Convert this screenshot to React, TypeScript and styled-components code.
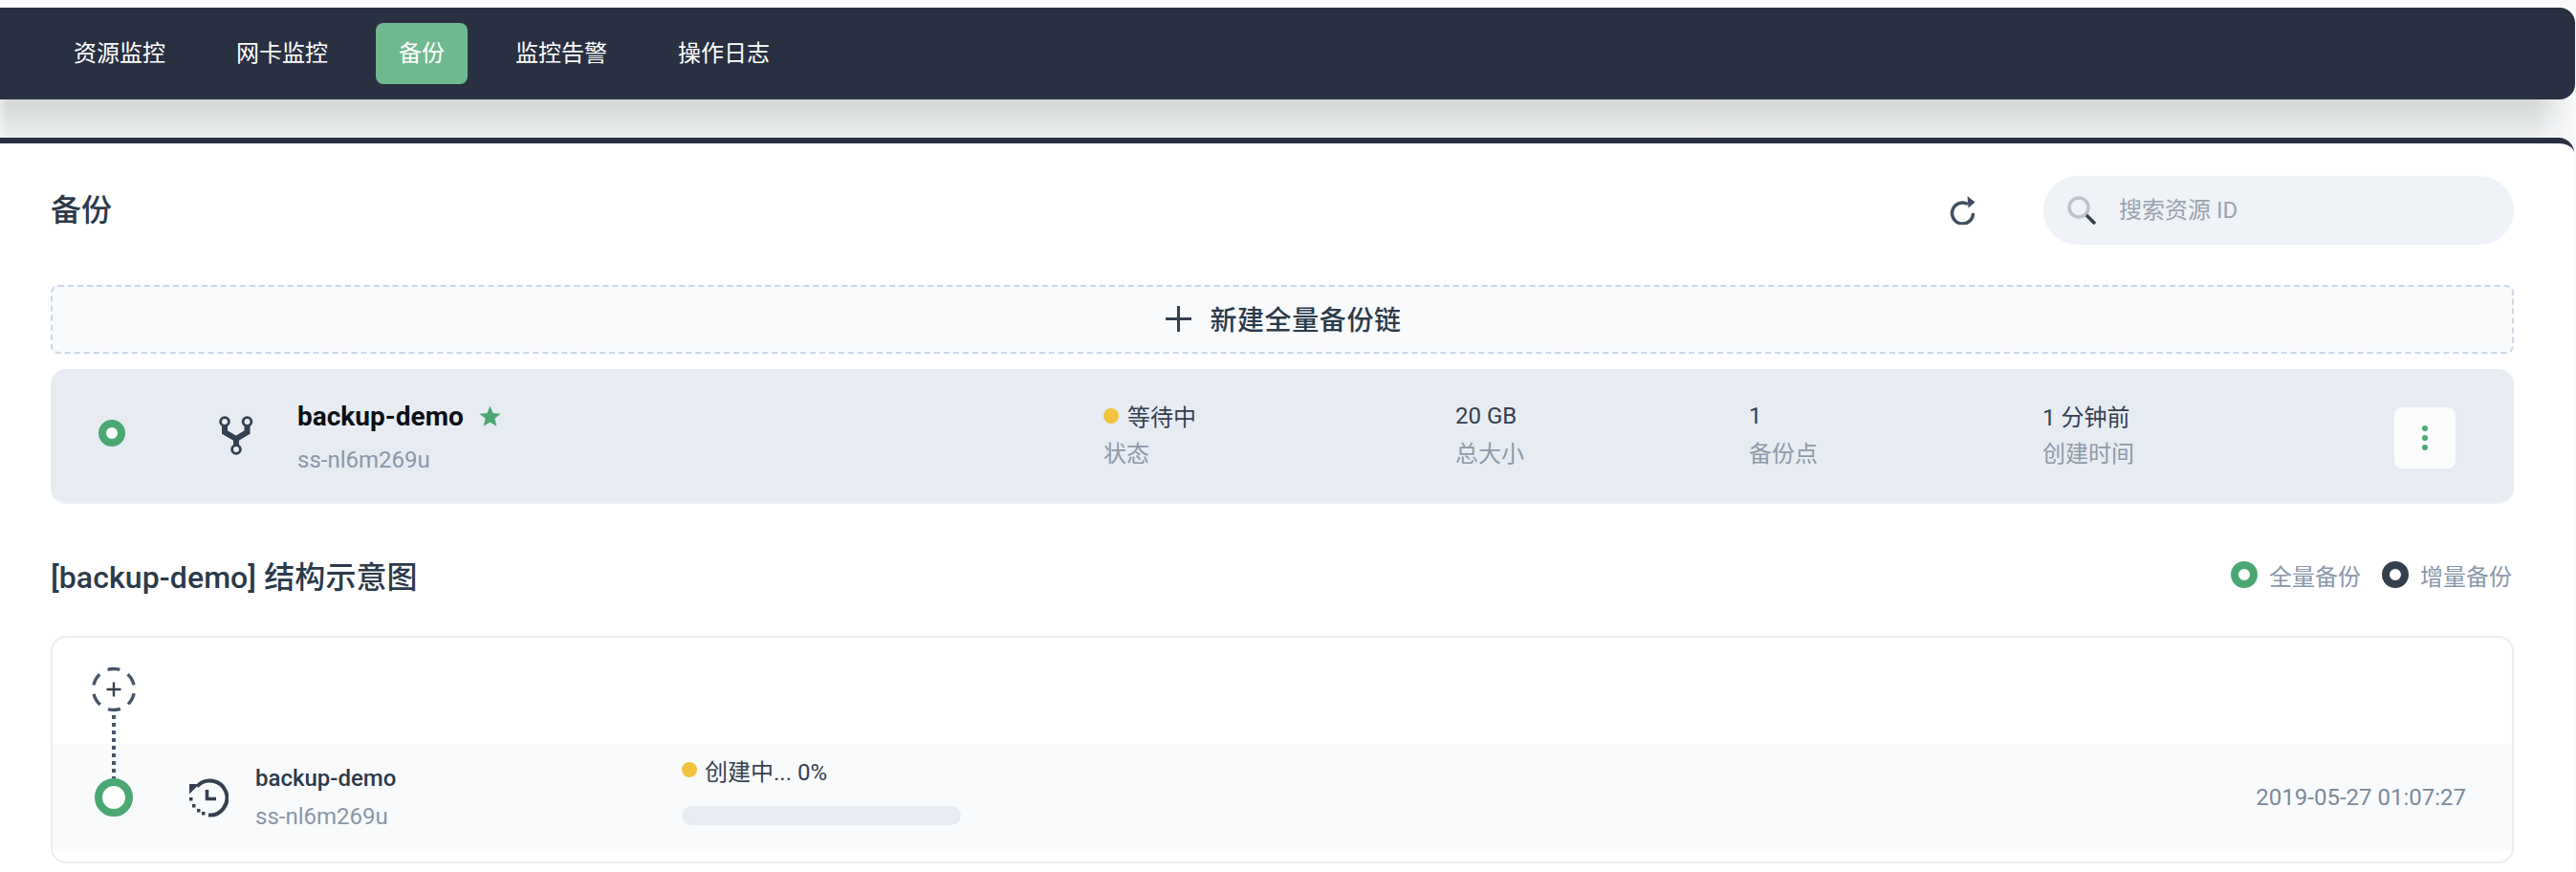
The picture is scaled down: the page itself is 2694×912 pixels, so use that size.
import styled, { createGlobalStyle } from "styled-components";

const GlobalStyle = createGlobalStyle`
  html, body {
    margin: 0;
    padding: 0;
    background: #f8f9fb;
  }
  body {
    font-family: Roboto, "Noto Sans CJK SC", sans-serif;
    overflow: hidden;
  }
  * {
    box-sizing: border-box;
  }
`;

const tabs = ["资源监控", "网卡监控", "备份", "监控告警", "操作日志"];

const stats = [
  { value: "20 GB", label: "总大小" },
  { value: "1", label: "备份点" },
  { value: "1 分钟前", label: "创建时间" },
];

function RefreshIcon() {
  return (
    <svg width="27" height="30" viewBox="0 0 27 30">
      <path d="M19 8.5 A11 11 0 1 0 24.5 18" fill="none" stroke="#3f4e60" strokeWidth="3.5" />
      <polygon points="18.5,0 26.5,6.5 19.5,12.5" fill="#3f4e60" />
    </svg>
  );
}

function SearchIcon() {
  return (
    <svg width="30" height="30" viewBox="0 0 30 30">
      <circle cx="12" cy="12" r="10" fill="none" stroke="#bcc5cf" strokeWidth="3.5" />
      <line x1="20" y1="20" x2="29" y2="29" stroke="#35404f" strokeWidth="3.5" />
    </svg>
  );
}

function ForkIcon() {
  return (
    <svg width="36" height="41" viewBox="0 0 36 41">
      <path d="M6 10 V17 L18 24 L29.5 17 V10 M18 24 V31" fill="none" stroke="#35404f" strokeWidth="6" />
      <circle cx="6" cy="6" r="4.4" fill="#e7ecf3" stroke="#35404f" strokeWidth="2.8" />
      <circle cx="29.5" cy="6" r="4.4" fill="#e7ecf3" stroke="#35404f" strokeWidth="2.8" />
      <circle cx="18" cy="35" r="4.4" fill="#e7ecf3" stroke="#35404f" strokeWidth="2.8" />
    </svg>
  );
}

function StarIcon() {
  return (
    <svg width="23" height="23" viewBox="0 0 24 24">
      <polygon points="12,0.5 15.2,8.4 23.6,9 17.1,14.4 19.2,22.8 12,18.3 4.8,22.8 6.9,14.4 0.4,9 8.8,8.4" fill="#4ba873" />
    </svg>
  );
}

function PlusIcon() {
  return (
    <svg width="29" height="29" viewBox="0 0 29 29">
      <path d="M14.5 1 V28 M1 14.5 H28" stroke="#35404f" strokeWidth="3" />
    </svg>
  );
}

function HistoryIcon() {
  return (
    <svg width="41" height="41" viewBox="0 0 41 41">
      <path d="M8 8.5 A18 18 0 1 1 20 38.5" fill="none" stroke="#35404f" strokeWidth="4" />
      <polygon points="0,6 10.5,6 0,16.5" fill="#35404f" />
      <rect x="0" y="20" width="3.5" height="3.5" fill="#35404f" />
      <rect x="3" y="27" width="3.5" height="3.5" fill="#35404f" />
      <rect x="8" y="32" width="3.5" height="3.5" fill="#35404f" />
      <rect x="13" y="35" width="3.5" height="3.5" fill="#35404f" />
      <path d="M18.5 12 V21.5 H28" fill="none" stroke="#35404f" strokeWidth="3.6" />
    </svg>
  );
}

function AddNode() {
  return (
    <NodeSvg width="48" height="111" viewBox="0 0 48 111">
      <circle cx="24" cy="54" r="21.5" fill="none" stroke="#47566a" strokeWidth="3.4" strokeDasharray="13 9.51" transform="rotate(11 24 54)" />
      <path d="M16.5 54 H31.5 M24 46.5 V61.5" stroke="#35404f" strokeWidth="2.4" />
      <line x1="24" y1="81" x2="24" y2="147" stroke="#47566a" strokeWidth="4" strokeDasharray="4 4" />
    </NodeSvg>
  );
}

export default function App() {
  return (
    <>
      <GlobalStyle />
      <Page>
        <TopNav>
          {tabs.map((tab) => (
            <Tab key={tab} $active={tab === "备份"}>{tab}</Tab>
          ))}
        </TopNav>
        <NavShade />
        <Card>
          <Header>
            <Title>备份</Title>
            <HeaderTools>
              <RefreshIcon />
              <SearchBox>
                <SearchIcon />
                <SearchInput placeholder="搜索资源 ID" readOnly />
              </SearchBox>
            </HeaderTools>
          </Header>
          <AddButton>
            <PlusIcon />
            新建全量备份链
          </AddButton>
          <ChainRow>
            <ChainRing $size={28} $width={8} $color="#4ba873" />
            <ForkIcon />
            <NameBlock>
              <NameLine>
                <ChainName>backup-demo</ChainName>
                <StarIcon />
              </NameLine>
              <SubText $line={46}>ss-nl6m269u</SubText>
            </NameBlock>
            <Stat>
              <StatValue>
                <Dot />
                等待中
              </StatValue>
              <StatLabel>状态</StatLabel>
            </Stat>
            {stats.map((s) => (
              <Stat key={s.label}>
                <StatValue>{s.value}</StatValue>
                <StatLabel>{s.label}</StatLabel>
              </Stat>
            ))}
            <MenuButton>
              <MenuDot />
              <MenuDot />
              <MenuDot />
            </MenuButton>
          </ChainRow>
          <SectionHead>
            <SectionTitle>[backup-demo] 结构示意图</SectionTitle>
            <Legend>
              <LegendItem>
                <Ring $size={28} $width={8} $color="#4ba873" />
                全量备份
              </LegendItem>
              <LegendItem>
                <Ring $size={28} $width={8} $color="#35404f" />
                增量备份
              </LegendItem>
            </Legend>
          </SectionHead>
          <Panel>
            <AddArea>
              <AddNode />
            </AddArea>
            <PointRow>
              <PointRing $size={40} $width={8} $color="#4ba873" />
              <HistoryIcon />
              <PointName>
                <PointTitle>backup-demo</PointTitle>
                <SubText $line={40}>ss-nl6m269u</SubText>
              </PointName>
              <Progress>
                <ProgressText>
                  <Dot />
                  创建中... 0%
                </ProgressText>
                <ProgressBar />
              </Progress>
              <DateText>2019-05-27 01:07:27</DateText>
            </PointRow>
          </Panel>
        </Card>
      </Page>
    </>
  );
}

const Page = styled.div`
  width: 2694px;
  height: 912px;
  padding: 8px 1px 0 0;
  overflow: hidden;
`;

const TopNav = styled.nav`
  display: flex;
  align-items: center;
  gap: 26px;
  height: 96px;
  padding-left: 53px;
  background: #293042;
  border-radius: 0 16px 16px 0;
`;

const Tab = styled.div<{ $active?: boolean }>`
  height: 64px;
  padding: 0 24px;
  border-radius: 8px;
  font-size: 24px;
  line-height: 64px;
  color: #ffffff;
  background: ${(p) => (p.$active ? "#70b88f" : "transparent")};
`;

const NavShade = styled.div`
  height: 40px;
  background:
    linear-gradient(90deg, rgba(248, 249, 251, 0.5) 0, rgba(248, 249, 251, 0) 8px, rgba(248, 249, 251, 0) calc(100% - 44px), #f8f9fb 100%),
    linear-gradient(#d3d6d6, #eceef0);
`;

const Card = styled.main`
  height: 768px;
  margin-right: 1px;
  padding: 34px 0 0 53px;
  background: #ffffff;
  border-top: 6px solid #293042;
  border-radius: 0 16px 0 0;
`;

const Header = styled.header`
  display: flex;
  align-items: center;
  justify-content: space-between;
  width: 2576px;
  height: 72px;
`;

const Title = styled.h1`
  margin: 0;
  font-size: 32px;
  font-weight: 500;
  line-height: 72px;
  color: #2c3a4a;
`;

const HeaderTools = styled.div`
  display: flex;
  align-items: center;
  gap: 71px;
`;

const SearchBox = styled.div`
  display: flex;
  align-items: center;
  gap: 24px;
  width: 492px;
  height: 72px;
  padding-left: 25px;
  background: #eff2f7;
  border-radius: 36px;
`;

const SearchInput = styled.input`
  flex: 1;
  min-width: 0;
  padding: 0;
  border: 0;
  outline: 0;
  background: transparent;
  font-family: inherit;
  font-size: 24px;
  color: #35404f;
  &::placeholder {
    color: #9aa3af;
    opacity: 1;
  }
`;

const AddButton = styled.div`
  display: flex;
  align-items: center;
  justify-content: center;
  gap: 18px;
  width: 2576px;
  height: 72px;
  margin-top: 42px;
  padding: 0 0 2px 2px;
  background: #f8fafc;
  border: 2px dashed #cbd8e6;
  border-radius: 8px;
  font-size: 28px;
  font-weight: 500;
  letter-spacing: 0.6px;
  color: #2c3a4a;
`;

const ChainRow = styled.section`
  display: grid;
  grid-template-columns: 126px 82px 843px 368px 307px 307px 368px 64px;
  align-items: center;
  width: 2576px;
  height: 141px;
  margin-top: 16px;
  padding: 0 61px 0 50px;
  background: #e7ecf3;
  border-bottom: 2px solid #eef2f6;
  border-radius: 16px;
`;

const Ring = styled.span<{ $size: number; $width: number; $color: string }>`
  display: block;
  flex: none;
  width: ${(p) => p.$size}px;
  height: ${(p) => p.$size}px;
  background: #ffffff;
  border: ${(p) => p.$width}px solid ${(p) => p.$color};
  border-radius: 50%;
`;

const ChainRing = styled(Ring)`
  margin-bottom: 6px;
`;

const NameBlock = styled.div`
  display: flex;
  flex-direction: column;
  padding-top: 5px;
`;

const NameLine = styled.div`
  display: flex;
  align-items: center;
  gap: 16px;
  height: 46px;
`;

const ChainName = styled.span`
  font-size: 28px;
  font-weight: 700;
  color: #0c0f14;
`;

const SubText = styled.div<{ $line: number }>`
  height: ${(p) => p.$line}px;
  font-size: 24px;
  line-height: ${(p) => p.$line}px;
  color: #8a97a8;
`;

const Stat = styled.div`
  display: flex;
  flex-direction: column;
  padding-bottom: 2px;
`;

const StatValue = styled.div`
  display: flex;
  align-items: center;
  gap: 9px;
  height: 40px;
  font-size: 24px;
  color: #35404f;
`;

const StatLabel = styled.div`
  height: 40px;
  font-size: 24px;
  line-height: 40px;
  color: #8f9aa8;
`;

const Dot = styled.span`
  flex: none;
  width: 16px;
  height: 16px;
  background: #f1c33f;
  border-radius: 50%;
`;

const MenuButton = styled.div`
  display: flex;
  flex-direction: column;
  align-items: center;
  justify-content: center;
  gap: 4px;
  width: 64px;
  height: 64px;
  margin-top: 4px;
  background: #fbfcfd;
  border-radius: 8px;
`;

const MenuDot = styled.span`
  width: 6px;
  height: 6px;
  background: #4ba873;
  border-radius: 50%;
`;

const SectionHead = styled.div`
  display: flex;
  align-items: center;
  justify-content: space-between;
  width: 2576px;
  height: 48px;
  margin-top: 50px;
`;

const SectionTitle = styled.h2`
  margin: 0;
  font-size: 32px;
  font-weight: 500;
  letter-spacing: 0.1px;
  color: #2c3a4a;
`;

const Legend = styled.div`
  display: flex;
  align-items: center;
  gap: 22px;
  padding-right: 2px;
`;

const LegendItem = styled.div`
  display: flex;
  align-items: center;
  gap: 12px;
  font-size: 24px;
  color: #8a97a8;
`;

const Panel = styled.section`
  width: 2576px;
  height: 238px;
  margin-top: 40px;
  padding-bottom: 11px;
  background: #ffffff;
  border: 2px solid #e9eef3;
  border-radius: 16px;
`;

const AddArea = styled.div`
  height: 111px;
  padding-left: 40px;
`;

const NodeSvg = styled.svg`
  position: relative;
  z-index: 1;
  display: block;
  overflow: visible;
`;

const PointRow = styled.div`
  display: flex;
  align-items: center;
  height: 112px;
  padding-left: 44px;
  background: #f8fafb;
`;

const PointRing = styled(Ring)`
  position: relative;
  z-index: 2;
  margin-right: 59px;
`;

const PointName = styled.div`
  display: flex;
  flex-direction: column;
  width: 446px;
  margin-left: 28px;
`;

const PointTitle = styled.div`
  height: 40px;
  font-size: 24px;
  font-weight: 500;
  line-height: 40px;
  color: #2c3a4a;
`;

const Progress = styled.div`
  display: flex;
  flex-direction: column;
  gap: 26px;
  width: 292px;
  padding-bottom: 12px;
`;

const ProgressText = styled.div`
  display: flex;
  align-items: center;
  gap: 8px;
  height: 24px;
  font-size: 24px;
  color: #35404f;
`;

const ProgressBar = styled.div`
  height: 20px;
  background: #e7ecf3;
  border-radius: 10px;
`;

const DateText = styled.div`
  margin-left: auto;
  padding-right: 48px;
  font-size: 24px;
  color: #7d8a9a;
`;
